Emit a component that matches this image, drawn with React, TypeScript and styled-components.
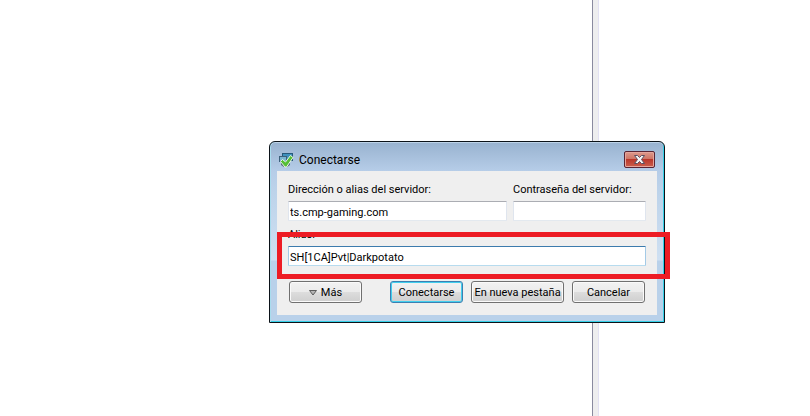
import React, { useState } from "react";
import styled, { createGlobalStyle, css } from "styled-components";

const GlobalStyle = createGlobalStyle`
  * { box-sizing: border-box; }
  body {
    margin: 0;
    background: #fff;
    color: #000;
    font-family: Roboto, "Noto Sans", sans-serif;
    font-size: 11px;
    line-height: 16px;
  }
  button, input { font: inherit; color: inherit; }
`;

const Workspace = styled.main`
  position: relative;
  display: flex;
  min-height: 100vh;
  overflow: hidden;
`;

const Pane = styled.div<{ $grow: number }>`
  flex: ${(p) => p.$grow} 1 0;
  background: #fff;
`;

const Splitter = styled.div`
  flex: 0 0 7px;
  background: #eeeeef;
  border-left: 1px solid #8a8b9f;
  border-right: 1px solid #e2e1f2;
`;

const Dialog = styled.section`
  position: absolute;
  top: 141px;
  left: 269px;
  width: 396px;
  padding: 0 6px 6px;
  border: 1px solid #0b1218;
  border-radius: 6px 6px 0 0;
  box-shadow: inset 1px 0 #a9dcee, inset -1px -1px #35d0e8, inset 0 1px #bdd3e8;
  background:
    linear-gradient(#98b2cf 0, #b6cde8 29px, #bdd3ea 50px, #cfe0f2 118px, #b9d1ea 119px);
`;

const TitleBar = styled.header`
  display: flex;
  align-items: center;
  height: 29px;
  padding: 6px 3px 0 2px;
`;

const Title = styled.h1`
  flex: 1;
  margin: 0 0 0 5px;
  font-size: 12px;
  font-weight: 400;
  line-height: 16px;
`;

const CloseButton = styled.button`
  display: grid;
  place-items: center;
  width: 31px;
  height: 17px;
  padding: 0;
  border: 1px solid #592433;
  border-radius: 2px;
  box-shadow: inset 0 0 0 1px #e5a59c;
  background: linear-gradient(#dd9a8d 0, #cf7565 46%, #b9362a 48%, #cb5f4c 100%);
`;

const Body = styled.form`
  margin: 0 1px 1px;
  padding: 11px 11px 12px;
  background: #efefef;
`;

const Fields = styled.div`
  display: grid;
  grid-template-columns: 219fr 133fr;
  gap: 6px;
`;

const Field = styled.div<{ $wide?: boolean }>`
  display: grid;
  gap: 3px;
  min-width: 0;
  ${(p) => p.$wide && css`grid-column: 1 / -1;`}
`;

const Label = styled.label`
  white-space: nowrap;
`;

const TextBox = styled.input<{ $active?: boolean }>`
  width: 100%;
  height: 20px;
  padding: 2px 1px 0;
  border: 1px solid;
  border-color: ${(p) => (p.$active ? "#3d7bad #a4cae6 #b7dbee #a4cae6" : "#abadb3 #dfe5ee #e3e9ef #dfe5ee")};
  border-radius: 1px;
  outline: none;
  background: #fff;
`;

const Actions = styled.div`
  display: flex;
  gap: 8px;
  margin: 15px 1px 0;
`;

const PushButton = styled.button<{ $primary?: boolean; $long?: boolean }>`
  display: flex;
  flex: 0 0 ${(p) => (p.$long ? 93 : 73)}px;
  align-items: center;
  justify-content: center;
  gap: 4px;
  height: 22px;
  padding: 2px 0 0;
  border: 1px solid ${(p) => (p.$primary ? "#3c7fb1" : "#707070")};
  border-radius: 3px;
  box-shadow: inset 0 0 0 1px ${(p) => (p.$primary ? "#42cfee" : "#fafafa")};
  background: linear-gradient(#f2f2f2 0, #ebebeb 49%, #dddddd 50%, #cfcfcf 100%);
  white-space: nowrap;
`;

const Spacer = styled.span`
  flex: 1;
  margin-right: -8px;
`;

const Highlight = styled.div`
  position: absolute;
  top: 90px;
  left: 7px;
  right: -6px;
  height: 47px;
  border: 5px solid #ed1c24;
  pointer-events: none;
`;

const AppIcon = () => (
  <svg width="16" height="16" viewBox="0 0 16 16" aria-hidden="true">
    <path d="M4 1h11v8H4z" fill="#27587a" />
    <path d="M5 2h9v6H5z" fill="#3f91bd" />
    <path d="M1 4h8v6H1z" fill="#3c607c" />
    <path d="M2 5h6v4H2z" fill="#79b5d0" />
    <path d="M3 10h9v3l-3 2H6l-3-2z" fill="#536b7b" />
    <path d="M2.500 9.500l2-2 3 2.500 5-6.500 2.500 2-6.500 9.500H7z" fill="#55bf35" stroke="#eef9e4" strokeWidth="1" />
  </svg>
);

const CloseIcon = () => (
  <svg width="13" height="11" viewBox="0 0 13 11" aria-hidden="true">
    <path
      d="M1.500 1.500h3l2 2 2-2h3L8.500 5.500l3 4h-3l-2-2-2 2h-3l3-4z"
      fill="#f5f5f7"
      stroke="#5b5060"
      strokeWidth="1"
    />
  </svg>
);

const MoreIcon = () => (
  <svg width="8" height="7" viewBox="0 0 8 7" aria-hidden="true">
    <path d="M.5 .500h7L4 5z" fill="#b5b5b5" stroke="#5c5c5c" strokeWidth="1" />
  </svg>
);

export default function App() {
  const [server, setServer] = useState("ts.cmp-gaming.com");
  const [password, setPassword] = useState("");
  const [alias, setAlias] = useState("SH[1CA]Pvt|Darkpotato");

  return (
    <>
      <GlobalStyle />
      <Workspace>
        <Pane $grow={592} />
        <Splitter />
        <Pane $grow={211} />
        <Dialog role="dialog" aria-labelledby="dialog-title">
          <TitleBar>
            <AppIcon />
            <Title id="dialog-title">Conectarse</Title>
            <CloseButton type="button" aria-label="Cerrar">
              <CloseIcon />
            </CloseButton>
          </TitleBar>
          <Body onSubmit={(e) => e.preventDefault()}>
            <Fields>
              <Field>
                <Label htmlFor="server">Dirección o alias del servidor:</Label>
                <TextBox id="server" value={server} onChange={(e) => setServer(e.target.value)} />
              </Field>
              <Field>
                <Label htmlFor="password">Contraseña del servidor:</Label>
                <TextBox
                  id="password"
                  type="password"
                  value={password}
                  onChange={(e) => setPassword(e.target.value)}
                />
              </Field>
              <Field $wide>
                <Label htmlFor="alias">Alias:</Label>
                <TextBox id="alias" $active value={alias} onChange={(e) => setAlias(e.target.value)} />
              </Field>
            </Fields>
            <Actions>
              <PushButton type="button">
                <MoreIcon />
                Más
              </PushButton>
              <Spacer />
              <PushButton type="submit" $primary>Conectarse</PushButton>
              <PushButton type="button" $long>En nueva pestaña</PushButton>
              <PushButton type="button">Cancelar</PushButton>
            </Actions>
          </Body>
          <Highlight />
        </Dialog>
      </Workspace>
    </>
  );
}
